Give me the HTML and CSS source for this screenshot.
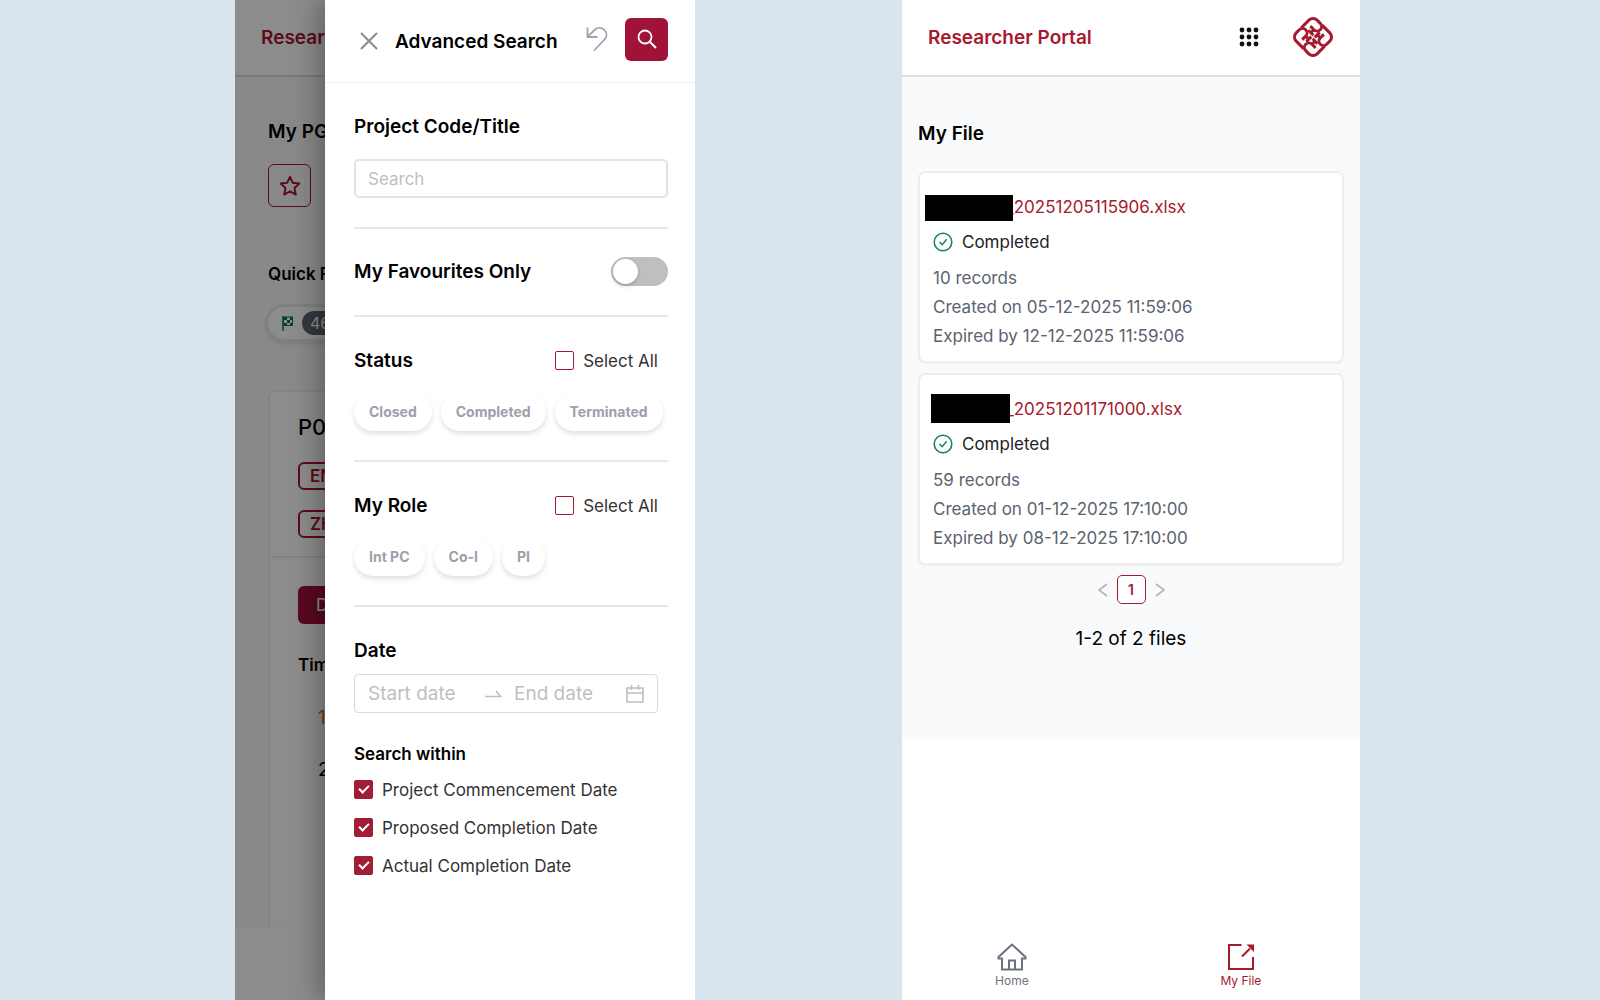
FILE: index.html
```html
<!DOCTYPE html>
<html lang="en">
<head>
  <meta charset="UTF-8" />
  <title>Researcher Portal</title>
  <meta name="viewport" content="width=device-width, initial-scale=1.0"/>
  <link rel="stylesheet" href="styles.css">
</head>
<body>
  <!-- Left screen: project list behind the search drawer -->
  <section class="screen screen-search">
    <div class="page" aria-hidden="true">
      <div class="topbar">
        <span class="brand">Researcher</span>
      </div>
      <div class="page-body">
        <h2 class="page-title">My PG</h2>
        <div class="star-box">
          <svg class="star-icon" viewBox="0 0 24 24">
            <path d="M12 2.800l2.800 6 6.500.8-4.800 4.500 1.300 6.500-5.800-3.200-5.800 3.200 1.300-6.500L2.700 9.600l6.500-.8z" fill="none" stroke="#a6192e" stroke-width="2" stroke-linejoin="round"/>
          </svg>
        </div>
        <h3 class="quick-title">Quick F</h3>
        <div class="quick-chip">
          <svg class="flag-icon" viewBox="0 0 12 15">
            <path d="M1 0V15" stroke="#0a7d4b" stroke-width="1.500"/>
            <rect x="1.500" y="1" width="9" height="8.500" fill="none" stroke="#0a7d4b"/>
            <path d="M2 1h3v3H2zM8 1h3v3H8zM5 4h3v3H5zM2 7h3v3H2zM8 7h3v3H8z" fill="#0a7d4b"/>
          </svg>
          <span class="quick-count">46</span>
        </div>
        <div class="project-card">
          <div class="project-head">
            <div class="project-code">P0</div>
            <span class="lang-tag">EN</span>
            <span class="lang-tag">ZH</span>
          </div>
          <div class="project-main">
            <div class="project-button">D</div>
            <div class="project-label">Time</div>
            <div class="project-number orange">1</div>
            <div class="project-number">2</div>
          </div>
        </div>
      </div>
    </div>
    <div class="mask"></div>

    <form class="drawer">
      <div class="drawer-header">
        <button type="button" class="icon-button" aria-label="Close">
          <svg viewBox="0 0 18 18" width="18" height="18"><path d="M1 1l16 16M17 1L1 17" stroke="#8c8c8c" stroke-width="2"/></svg>
        </button>
        <h2>Advanced Search</h2>
        <div class="drawer-actions">
          <button type="button" class="icon-button" aria-label="Reset">
            <svg viewBox="0 0 22 26" width="22" height="26"><path d="M1.500 1.500v9.500h10M2 10.500L8.500 4c3-2.800 7-2.800 9.800-.1 2.800 2.800 2.900 6.800.2 9.600L8 24.500" fill="none" stroke="#9ca3af" stroke-width="1.800"/></svg>
          </button>
          <button type="submit" class="search-button" aria-label="Search">
            <svg viewBox="0 0 20 20" width="20" height="20"><circle cx="8" cy="8" r="6.500" fill="none" stroke="#fff" stroke-width="1.800"/><path d="M12.800 12.800L19 19" stroke="#fff" stroke-width="2"/></svg>
          </button>
        </div>
      </div>

      <div class="drawer-body">
        <div class="section">
          <label class="section-title block" for="keyword">Project Code/Title</label>
          <input class="text-input" id="keyword" type="text" placeholder="Search">
        </div>

        <div class="section row">
          <label class="section-title" for="favourites">My Favourites Only</label>
          <input class="switch" id="favourites" type="checkbox" role="switch">
        </div>

        <div class="section">
          <div class="row indent">
            <h3 class="section-title">Status</h3>
            <label class="check"><input type="checkbox"><span>Select All</span></label>
          </div>
          <div class="chips">
            <button type="button" class="chip">Closed</button>
            <button type="button" class="chip">Completed</button>
            <button type="button" class="chip">Terminated</button>
          </div>
        </div>

        <div class="section">
          <div class="row indent">
            <h3 class="section-title">My Role</h3>
            <label class="check"><input type="checkbox"><span>Select All</span></label>
          </div>
          <div class="chips">
            <button type="button" class="chip">Int PC</button>
            <button type="button" class="chip">Co-I</button>
            <button type="button" class="chip">PI</button>
          </div>
        </div>

        <div class="section">
          <h3 class="section-title">Date</h3>
          <div class="date-range">
            <input type="text" placeholder="Start date" aria-label="Start date">
            <svg class="range-arrow" viewBox="0 0 17 8" width="17" height="8"><path d="M0 6.500h15.500L11 1" fill="none" stroke="#bfbfbf" stroke-width="1.600"/></svg>
            <input type="text" placeholder="End date" aria-label="End date">
            <svg viewBox="0 0 18 18" width="18" height="18"><path d="M1 3h16v14H1zM1 8h16M5.500 0v5M12.500 0v5" fill="none" stroke="#bfbfbf" stroke-width="1.600"/></svg>
          </div>
          <h4 class="within-title">Search within</h4>
          <div class="check-list">
            <label class="check"><input type="checkbox" checked><span>Project Commencement Date</span></label>
            <label class="check"><input type="checkbox" checked><span>Proposed Completion Date</span></label>
            <label class="check"><input type="checkbox" checked><span>Actual Completion Date</span></label>
          </div>
        </div>
      </div>
    </form>
  </section>

  <!-- Right screen: exported files -->
  <section class="screen screen-files">
    <header class="topbar">
      <span class="brand">Researcher Portal</span>
      <button type="button" class="icon-button" aria-label="Apps">
        <svg viewBox="0 0 20 20" width="20" height="20" fill="#111">
          <circle cx="3" cy="3" r="2.400"/><circle cx="10" cy="3" r="2.400"/><circle cx="17" cy="3" r="2.400"/>
          <circle cx="3" cy="10" r="2.400"/><circle cx="10" cy="10" r="2.400"/><circle cx="17" cy="10" r="2.400"/>
          <circle cx="3" cy="17" r="2.400"/><circle cx="10" cy="17" r="2.400"/><circle cx="17" cy="17" r="2.400"/>
        </svg>
      </button>
      <svg class="logo" viewBox="-21 -21 42 42">
        <defs>
          <path id="knot" d="M-14.800 2V-9a5.800 5.800 0 0 1 5.800-5.800H-4.500a4.500 4.500 0 0 1 0 9H-9.500M-4.500 -6V-1.500M-8 -1.500H-1"/>
        </defs>
        <g transform="rotate(45)" fill="none" stroke="#a6192e" stroke-width="3">
          <use href="#knot"/>
          <use href="#knot" transform="rotate(90)"/>
          <use href="#knot" transform="rotate(180)"/>
          <use href="#knot" transform="rotate(270)"/>
        </g>
      </svg>
    </header>

    <main class="files">
      <h2 class="page-title">My File</h2>
      <article class="file-card">
        <a class="file-name" href="#">_20251205115906.xlsx<span class="redacted wide"></span></a>
        <div class="file-status">
          <svg viewBox="0 0 20 20" width="20" height="20"><circle cx="10" cy="10" r="8.800" fill="none" stroke="#198754" stroke-width="1.600"/><path d="M6.500 10l2.700 2.700 4.500-5.400" fill="none" stroke="#198754" stroke-width="1.500"/></svg>
          Completed
        </div>
        <p>10 records</p>
        <p>Created on 05-12-2025 11:59:06</p>
        <p>Expired by 12-12-2025 11:59:06</p>
      </article>
      <article class="file-card">
        <a class="file-name" href="#">_20251201171000.xlsx<span class="redacted"></span></a>
        <div class="file-status">
          <svg viewBox="0 0 20 20" width="20" height="20"><circle cx="10" cy="10" r="8.800" fill="none" stroke="#198754" stroke-width="1.600"/><path d="M6.500 10l2.700 2.700 4.500-5.400" fill="none" stroke="#198754" stroke-width="1.500"/></svg>
          Completed
        </div>
        <p>59 records</p>
        <p>Created on 01-12-2025 17:10:00</p>
        <p>Expired by 08-12-2025 17:10:00</p>
      </article>

      <nav class="pagination" aria-label="Pages">
        <button type="button" class="icon-button" aria-label="Previous page">
          <svg viewBox="0 0 10 14" width="10" height="14"><path d="M9 1L1 7l8 6" fill="none" stroke="#b5b5b5" stroke-width="1.600"/></svg>
        </button>
        <button type="button" class="page-number">1</button>
        <button type="button" class="icon-button" aria-label="Next page">
          <svg viewBox="0 0 10 14" width="10" height="14"><path d="M1 1l8 6-8 6" fill="none" stroke="#b5b5b5" stroke-width="1.600"/></svg>
        </button>
      </nav>
      <div class="file-total">1-2 of 2 files</div>
    </main>

    <nav class="tabbar">
      <a href="#">
        <svg viewBox="0 0 30 28" width="30" height="28"><path d="M15 1.500L1.500 14v1.500H5V26.500h20V15.500h3.500V14zM12 26V17.500h6V26" fill="none" stroke="#6b7280" stroke-width="2"/></svg>
        Home
      </a>
      <a href="#" class="active">
        <svg viewBox="0 0 28 28" width="28" height="28"><path d="M14.500 2H2v24h24V14M15 13.500l8-8" fill="none" stroke="#a6192e" stroke-width="2"/><path d="M19.500 1.500H27V9z" fill="#a6192e"/></svg>
        My File
      </a>
    </nav>
  </section>
</body>
</html>
```

FILE: styles.css
```css
* {
  box-sizing: border-box;
}
body {
  display: grid;
  grid-template-columns: 235fr 460fr 207fr 458fr 240fr;
  margin: 0;
  min-height: 100vh;
  background: #d8e5ee;
  font-family: Inter, "Liberation Sans", sans-serif;
  font-size: 17px;
  color: #000;
}
h2, h3, h4, p {
  margin: 0;
}
button, input {
  font-family: inherit;
}
.screen {
  background: #fff;
}

/* Shared header */
.topbar {
  display: flex;
  align-items: center;
  height: 77px;
  padding: 0 26px 1px;
  background: #fff;
  border-bottom: 2px solid #dcdee2;
}
.brand {
  flex: 1;
  font-size: 19px;
  font-weight: 600;
  color: #a6192e;
}
.icon-button {
  display: flex;
  padding: 0;
  border: none;
  background: none;
  cursor: pointer;
}
.logo {
  width: 42px;
  height: 42px;
  margin-left: 33px;
}
.page-title {
  font-size: 19px;
  line-height: 24px;
  font-weight: 600;
}

/* Page behind the drawer */
.screen-search {
  grid-column: 2;
  position: relative;
  overflow: hidden;
}
.page-body {
  height: 850px;
  padding: 43px 0 0 33px;
  background: #f9fafc;
}
.star-box {
  display: flex;
  align-items: center;
  justify-content: center;
  width: 43px;
  height: 43px;
  margin-top: 20px;
  border: 1px solid #a6192e;
  border-radius: 6px;
}
.star-icon {
  width: 24px;
  height: 24px;
}
.quick-title {
  margin-top: 56px;
  font-size: 17px;
  line-height: 22px;
  font-weight: 600;
}
.quick-chip {
  display: flex;
  align-items: center;
  gap: 8px;
  width: 120px;
  height: 32px;
  margin-top: 22px;
  padding-left: 14px;
  border-radius: 16px;
  background: #fff;
  box-shadow: 0 0 0 3px #e5e7eb, 0 4px 6px rgba(0, 0, 0, 0.15);
}
.flag-icon {
  width: 12px;
  height: 15px;
}
.quick-count {
  padding: 0 8px;
  border-radius: 12px;
  background: #5d6673;
  color: #fff;
  font-size: 16px;
  line-height: 24px;
}
.project-card {
  display: flex;
  flex-direction: column;
  height: 536px;
  margin-top: 51px;
  border: 2px solid #f0f1f4;
  border-bottom: none;
  border-radius: 8px 0 0 0;
  background: #fff;
}
.project-head {
  display: flex;
  flex-direction: column;
  align-items: flex-start;
  padding: 20px 28px 18px;
  border-bottom: 2px solid #ebedf0;
}
.project-code {
  font-size: 22px;
  line-height: 30px;
  font-weight: 500;
}
.lang-tag {
  margin-top: 20px;
  padding: 0 10px;
  border: 2px solid #a6192e;
  border-radius: 6px;
  color: #a6192e;
  font-size: 17px;
  line-height: 24px;
  font-weight: 600;
}
.project-main {
  padding: 28px;
}
.project-button {
  height: 38px;
  padding-left: 18px;
  border-radius: 6px;
  background: #a01238;
  color: #fff;
  font-size: 17px;
  line-height: 38px;
}
.project-label {
  margin: 29px 0;
  font-size: 17px;
  line-height: 24px;
  font-weight: 600;
}
.project-number {
  padding-left: 20px;
  margin-bottom: 28px;
  font-size: 19px;
  line-height: 24px;
}
.project-number.orange {
  color: #d46b08;
}
.mask {
  position: absolute;
  inset: 0;
  background: rgba(0, 0, 0, 0.45);
}

/* Search drawer */
.drawer {
  position: absolute;
  top: 0;
  right: 0;
  bottom: 0;
  width: 370px;
  background: #fff;
  box-shadow: -6px 0 16px rgba(0, 0, 0, 0.1), -8px 0 28px rgba(0, 0, 0, 0.2);
}
.drawer-header {
  display: flex;
  align-items: center;
  height: 83px;
  padding: 0 27px 0 35px;
  border-bottom: 1px solid #efefef;
}
.drawer-header h2 {
  flex: 1;
  margin-left: 17px;
  font-size: 19px;
  font-weight: 600;
}
.drawer-actions {
  display: flex;
  align-items: center;
  gap: 17px;
  padding-bottom: 4px;
}
.search-button {
  display: flex;
  align-items: center;
  justify-content: center;
  width: 43px;
  height: 43px;
  border: none;
  border-radius: 6px;
  background: #a01238;
  cursor: pointer;
}
.drawer-body {
  padding: 0 27px 0 29px;
}
.section {
  padding: 32px 0 29px;
}
.section + .section {
  border-top: 2px solid #e5e7eb;
}
.section-title {
  font-size: 19px;
  line-height: 24px;
  font-weight: 600;
}
.block {
  display: block;
}
.row {
  display: flex;
  align-items: center;
  justify-content: space-between;
}
.section.row {
  padding: 28px 0 29px;
}
.indent {
  padding-right: 10px;
}
.text-input {
  width: 100%;
  height: 39px;
  margin-top: 20px;
  padding: 0 12px;
  border: 2px solid #e3e3e3;
  border-radius: 5px;
  font-size: 17px;
}
input::placeholder {
  color: #bfbfbf;
}
.switch {
  appearance: none;
  width: 57px;
  height: 29px;
  margin: 0;
  padding: 2px;
  border-radius: 15px;
  background: #bfbfbf;
  cursor: pointer;
}
.switch::before {
  content: "";
  display: block;
  width: 25px;
  height: 25px;
  border-radius: 50%;
  background: #fff;
  box-shadow: 0 2px 4px rgba(0, 35, 11, 0.2);
}
.switch:checked {
  background: #a6192e;
}
.switch:checked::before {
  margin-left: auto;
}
.check {
  display: flex;
  align-items: center;
  gap: 9px;
  line-height: 24px;
  color: #333;
}
.check input {
  appearance: none;
  display: flex;
  justify-content: center;
  width: 19px;
  height: 19px;
  margin: 0 0 2px;
  border: 1px solid #a6192e;
  border-radius: 2px;
  background: #fff;
}
.check input:checked {
  background: #a01f36;
}
.check input:checked::after {
  content: "";
  width: 4px;
  height: 8px;
  margin-top: 2px;
  border: solid #fff;
  border-width: 0 2px 2px 0;
  transform: rotate(45deg);
}
.chips {
  display: flex;
  gap: 9px;
  margin-top: 20px;
}
.chip {
  height: 38px;
  padding: 0 15px 2px;
  border: none;
  border-radius: 19px;
  background: #fff;
  box-shadow: 0 3px 5px rgba(0, 0, 0, 0.12);
  color: #9ca0ab;
  font-size: 14px;
  font-weight: 700;
  cursor: pointer;
}
.date-range {
  display: flex;
  align-items: center;
  height: 39px;
  margin: 11px 10px 0 0;
  padding: 0 13px;
  border: 1px solid #d9d9d9;
  border-radius: 4px;
}
.date-range input {
  flex: 1;
  min-width: 0;
  padding: 0;
  border: none;
  font-size: 19px;
}
.range-arrow {
  margin: 0 12px 0 5px;
}
.within-title {
  margin: 29px 0 12px;
  font-size: 17px;
  line-height: 24px;
  font-weight: 600;
}
.check-list {
  display: flex;
  flex-direction: column;
  gap: 14px;
}

/* File list */
.screen-files {
  grid-column: 4;
  display: flex;
  flex-direction: column;
}
.files {
  display: flex;
  flex-direction: column;
  gap: 10px;
  min-height: 660px;
  padding: 45px 16px;
  background: #f9fafc;
}
.files .page-title {
  margin-bottom: 15px;
}
.file-card {
  padding: 20px 13px 10px;
  border: 2px solid #eceef2;
  border-radius: 7px;
  background: #fff;
  box-shadow: 0 1px 2px rgba(0, 0, 0, 0.04);
  line-height: 28px;
}
.file-card p {
  line-height: 29px;
  color: #5a6370;
}
.file-name {
  position: relative;
  display: block;
  padding-left: 73px;
  color: #a6192e;
  text-decoration: none;
}
.redacted {
  position: absolute;
  top: -1px;
  left: -2px;
  width: 79px;
  height: 29px;
  background: #000;
}
.redacted.wide {
  top: 2px;
  left: -8px;
  width: 88px;
  height: 26px;
}
.file-status {
  display: flex;
  align-items: center;
  gap: 9px;
  margin: 7px 0 8px;
  color: #222;
}
.pagination {
  display: flex;
  align-items: center;
  justify-content: center;
  gap: 9px;
}
.page-number {
  width: 29px;
  height: 29px;
  padding: 0;
  border: 1px solid #a6192e;
  border-radius: 5px;
  background: #fff;
  color: #a6192e;
  font-size: 14px;
  font-weight: 600;
}
.file-total {
  margin-top: 13px;
  font-size: 19px;
  line-height: 24px;
  text-align: center;
}

/* Bottom tabs */
.tabbar {
  display: grid;
  grid-template-columns: 48fr 52fr;
  margin-top: auto;
  padding-bottom: 11px;
}
.tabbar a {
  display: flex;
  flex-direction: column;
  align-items: center;
  gap: 2px;
  color: #6b7280;
  font-size: 12px;
  line-height: 16px;
  text-decoration: none;
}
.tabbar .active {
  color: #a6192e;
}
```
